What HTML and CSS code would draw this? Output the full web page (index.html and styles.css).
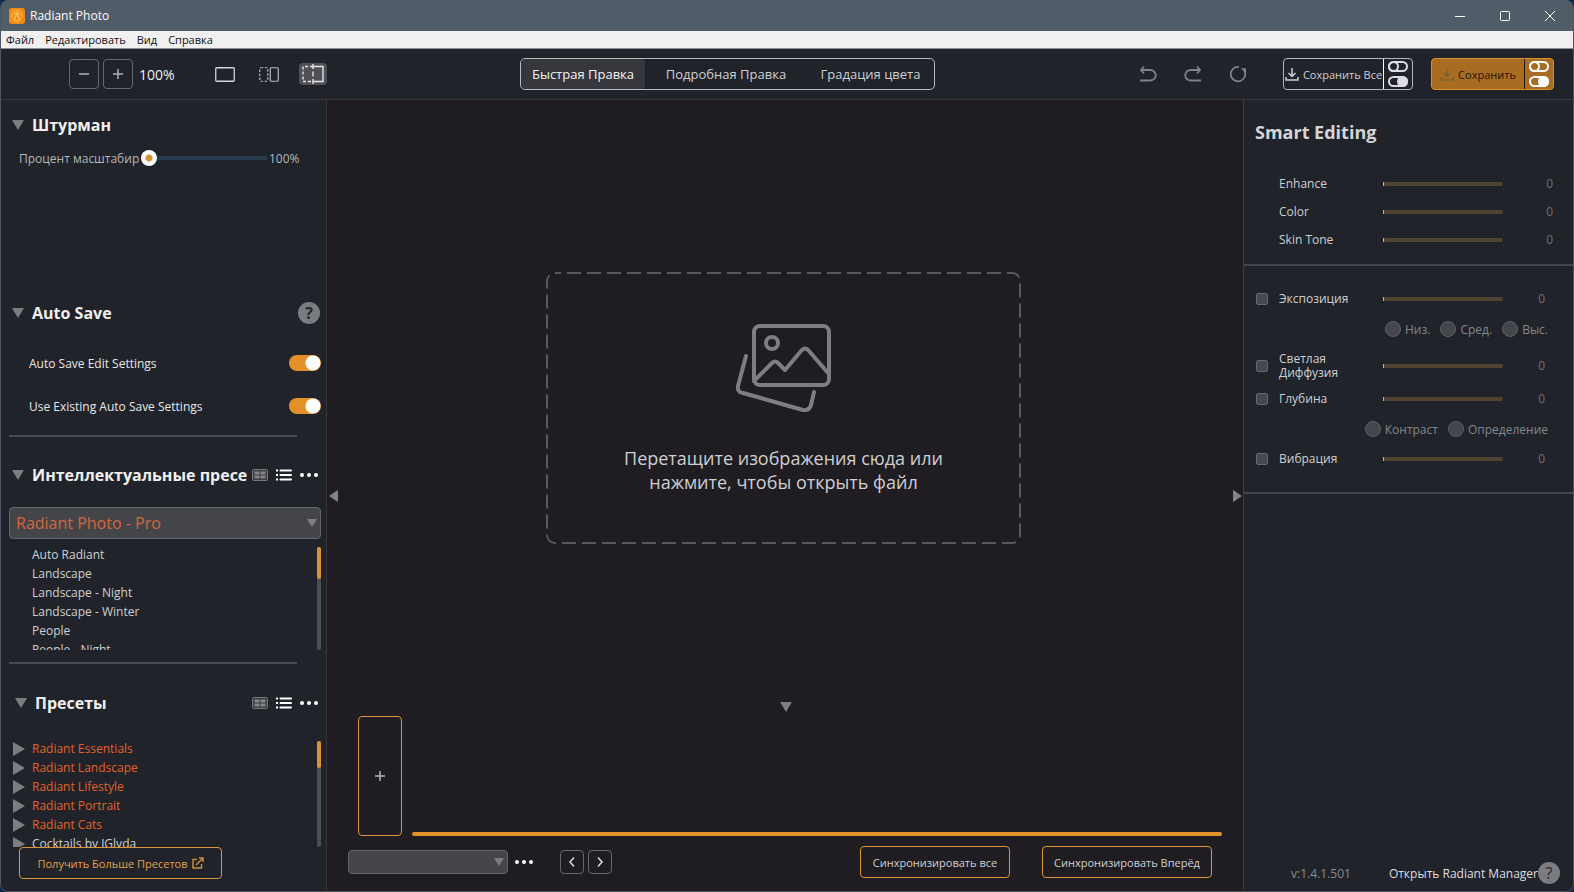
FILE: index.html
```html
<!DOCTYPE html>
<html lang="ru">
<head>
<meta charset="utf-8">
<title>Radiant Photo</title>
<link rel="stylesheet" href="styles.css">
</head>
<body>
<svg class="defs" aria-hidden="true">
  <symbol id="grid" viewBox="0 0 16 12"><rect x=".5" y=".5" width="15" height="11" rx="1" fill="#3c3d40" stroke="#77787a"/><path d="M2.500 2.500h5v3h-5zM8.500 2.500h5v3h-5zM2.500 6.500h5v3h-5zM8.500 6.500h5v3h-5z" fill="#858688"/></symbol>
  <symbol id="list" viewBox="0 0 16 12"><path d="M4.500 1.500H15M4.500 6H15M4.500 10.500H15" stroke="#fff" stroke-width="2" stroke-linecap="round"/><path d="M0 .5h2v2H0zM0 5h2v2H0zM0 9.500h2v2H0z" fill="#fff"/></symbol>
  <symbol id="dots" viewBox="0 0 18 4"><circle cx="2" cy="2" r="2" fill="#fff"/><circle cx="9" cy="2" r="2" fill="#fff"/><circle cx="16" cy="2" r="2" fill="#fff"/></symbol>
  <symbol id="down" viewBox="0 0 12 10"><path d="M0 0h12L6 10z" fill="#7d7d80"/></symbol>
  <symbol id="right" viewBox="0 0 12 14"><path d="M0 0l12 7L0 14z" fill="#7d7e80"/></symbol>
  <symbol id="side" viewBox="0 0 9 12"><path d="M9 0v12L0 6z" fill="#858588"/></symbol>
  <symbol id="switches" viewBox="0 0 20 26"><rect x="1" y="1" width="18" height="9" rx="4.500" fill="none" stroke="currentColor" stroke-width="2"/><rect x="1" y="1" width="9" height="9" rx="4.500" fill="none" stroke="currentColor" stroke-width="2"/><rect x="1" y="16" width="18" height="9" rx="4.500" fill="none" stroke="currentColor" stroke-width="2"/><rect x="10" y="16" width="9" height="9" rx="4.500" fill="currentColor" stroke="currentColor" stroke-width="2"/></symbol>
  <symbol id="save" viewBox="0 0 14 14"><path d="M7 1v8M3.500 6L7 9.500 10.500 6M1 10v3h12v-3" fill="none" stroke="currentColor" stroke-width="1.500"/></symbol>
  <symbol id="undo" viewBox="0 0 18 18"><path d="M5 1.500L2 5l3 3.500M2 5h9.500a5 5 0 0 1 0 10.500H1" fill="none" stroke="#818287" stroke-width="1.800"/></symbol>
</svg>
<div class="window">
  <header class="titlebar">
    <svg class="logo" viewBox="0 0 16 16"><rect width="16" height="16" rx="3" fill="#f08a18"/><path d="M5.500 12.500l-3-4.500 1-3.500L6 2.500h4L12.500 4.500l1 3.500-3 4.500zM2.500 8l5.500-4 5.500 4M5.500 12.500L8 4l2.500 8.500M5 5l6 5M11 5l-6 5M6.500 14h3" fill="none" stroke="#ffc75c" stroke-width=".8"/></svg>
    <span class="title">Radiant Photo</span>
    <div class="controls">
      <button aria-label="Свернуть"><svg width="12" height="12"><path d="M1 6.500h10" stroke="#fff"/></svg></button>
      <button aria-label="Развернуть"><svg width="12" height="12"><rect x="1.500" y="1.500" width="9" height="9" rx="1" fill="none" stroke="#fff"/></svg></button>
      <button aria-label="Закрыть"><svg width="12" height="12"><path d="M1 1l10 10M11 1L1 11" stroke="#fff"/></svg></button>
    </div>
  </header>
  <nav class="menubar"><button>Файл</button><button>Редактировать</button><button>Вид</button><button>Справка</button></nav>

  <div class="toolbar">
    <div class="zoom">
      <button class="square" aria-label="Уменьшить"><svg width="12" height="12"><path d="M1 6h10" stroke="#aeb0b4" stroke-width="1.500"/></svg></button>
      <button class="square" aria-label="Увеличить"><svg width="12" height="12"><path d="M1 6h10M6 1v10" stroke="#aeb0b4" stroke-width="1.500"/></svg></button>
      <span class="percent">100%</span>
    </div>
    <div class="views">
      <button aria-label="Один вид"><svg width="20" height="15"><rect x=".75" y=".75" width="18.500" height="13.500" rx="1" fill="none" stroke="#d5d5d8" stroke-width="1.300"/></svg></button>
      <button aria-label="Два вида"><svg width="20" height="15"><rect x=".75" y=".75" width="8" height="13.500" rx="1" fill="none" stroke="#b9b9bd" stroke-width="1.200" stroke-dasharray="2.500 1.500"/><rect x="11.250" y=".75" width="8" height="13.500" rx="1" fill="none" stroke="#b9b9bd" stroke-width="1.200"/></svg></button>
      <button class="on" aria-label="Разделённый вид"><svg width="22" height="20"><path d="M11 2.500H1v15H11" fill="none" stroke="#e5e5e8" stroke-width="1.400" stroke-dasharray="3 2"/><path d="M11 2.500h10v15H11" fill="none" stroke="#e5e5e8" stroke-width="1.400"/><path d="M11 0v20" stroke="#e5e5e8" stroke-width="1.400" stroke-dasharray="5 2.500"/></svg></button>
    </div>
    <div class="tabs"><button class="on">Быстрая Правка</button><button>Подробная Правка</button><button>Градация цвета</button></div>
    <div class="history">
      <button aria-label="Отменить"><svg width="18" height="18"><use href="#undo"/></svg></button>
      <button aria-label="Повторить"><svg class="flip" width="18" height="18"><use href="#undo"/></svg></button>
      <button aria-label="Сбросить"><svg width="18" height="18" viewBox="0 0 18 18"><path d="M10 2A7.200 7.200 0 1 0 15.200 5.500" fill="none" stroke="#818287" stroke-width="1.800"/><path d="M12 3.200h5v5z" fill="#818287"/></svg></button>
    </div>
    <div class="save all"><button class="label"><svg width="14" height="14"><use href="#save"/></svg>Сохранить Все</button><button class="opts" aria-label="Параметры сохранения всех"><svg width="20" height="26"><use href="#switches"/></svg></button></div>
    <div class="save one"><button class="label"><svg width="14" height="14"><use href="#save"/></svg>Сохранить</button><button class="opts" aria-label="Параметры сохранения"><svg width="20" height="26"><use href="#switches"/></svg></button></div>
  </div>

  <div class="body">
    <aside class="left">
      <section class="navigator">
        <h2><svg width="12" height="10"><use href="#down"/></svg><span>Штурман</span></h2>
        <div class="scale"><label for="scale">Процент масштабир</label><input id="scale" type="range" value="0"><output for="scale">100%</output></div>
      </section>
      <section class="autosave">
        <h2><svg width="12" height="10"><use href="#down"/></svg><span>Auto Save</span><button class="help" aria-label="Справка">?</button></h2>
        <label class="toggle">Auto Save Edit Settings<input type="checkbox" checked></label>
        <label class="toggle">Use Existing Auto Save Settings<input type="checkbox" checked></label>
      </section>
      <hr>
      <section class="smart">
        <h2><svg width="12" height="10"><use href="#down"/></svg><span>Интеллектуальные пресе</span><span class="tools"><button aria-label="Сетка"><svg width="16" height="12"><use href="#grid"/></svg></button><button aria-label="Список"><svg width="16" height="12"><use href="#list"/></svg></button><button aria-label="Ещё"><svg width="18" height="4"><use href="#dots"/></svg></button></span></h2>
        <div class="select"><select aria-label="Набор пресетов"><option>Radiant Photo - Pro</option></select><svg width="10" height="8" viewBox="0 0 12 10" preserveAspectRatio="none"><use href="#down"/></svg></div>
        <div class="scroller"><ul><li>Auto Radiant</li><li>Landscape</li><li>Landscape - Night</li><li>Landscape - Winter</li><li>People</li><li>People - Night</li></ul><div class="bar"><i></i></div></div>
      </section>
      <hr>
      <section class="presets">
        <h2><svg width="12" height="10"><use href="#down"/></svg><span>Пресеты</span><span class="tools"><button aria-label="Сетка"><svg width="16" height="12"><use href="#grid"/></svg></button><button aria-label="Список"><svg width="16" height="12"><use href="#list"/></svg></button><button aria-label="Ещё"><svg width="18" height="4"><use href="#dots"/></svg></button></span></h2>
        <div class="scroller tree"><ul>
          <li><svg width="12" height="14"><use href="#right"/></svg>Radiant Essentials</li>
          <li><svg width="12" height="14"><use href="#right"/></svg>Radiant Landscape</li>
          <li><svg width="12" height="14"><use href="#right"/></svg>Radiant Lifestyle</li>
          <li><svg width="12" height="14"><use href="#right"/></svg>Radiant Portrait</li>
          <li><svg width="12" height="14"><use href="#right"/></svg>Radiant Cats</li>
          <li class="plain"><svg width="12" height="14"><use href="#right"/></svg>Cocktails by JGlyda</li>
        </ul><div class="bar"><i></i></div></div>
        <button class="outline more">Получить Больше Пресетов<svg width="12" height="12" viewBox="0 0 12 12"><path d="M5 2.500H1v8.500h8.500V7M4 8l7-7M7 1h4v4" fill="none" stroke="#c58d3f" stroke-width="1.500"/></svg></button>
      </section>
    </aside>

    <main class="center">
      <div class="stage">
        <button class="edge" aria-label="Скрыть левую панель"><svg width="9" height="12"><use href="#side"/></svg></button>
        <button class="drop">
          <svg class="dash" aria-hidden="true"><rect x="1" y="1" rx="8"/></svg>
          <svg width="96" height="88" viewBox="0 0 96 88" fill="none" stroke="#7d7e82" stroke-width="4" stroke-linecap="round" stroke-linejoin="round"><rect x="18" y="2" width="75" height="59" rx="6"/><circle cx="36" cy="19" r="6"/><path d="M18 57L36 39q3-3 6 0l7 7 16-19q4-5 8 0L92 49M10 32L2 62q-1 6 5 7l60 17q6 1 8-5l3-13"/></svg>
          <span>Перетащите изображения сюда или<br>нажмите, чтобы открыть файл</span>
        </button>
        <button class="edge" aria-label="Скрыть правую панель"><svg class="flip" width="9" height="12"><use href="#side"/></svg></button>
      </div>
      <button class="fold" aria-label="Скрыть ленту"><svg width="12" height="10"><use href="#down"/></svg></button>
      <div class="strip"><button class="add" aria-label="Добавить"><svg width="12" height="12"><path d="M1 6h10M6 1v10" stroke="#b5b5ba" stroke-width="1.500"/></svg></button><div class="track"></div></div>
      <div class="actions">
        <div class="select"><select aria-label="Фильтр"><option></option></select><svg width="10" height="8" viewBox="0 0 12 10" preserveAspectRatio="none"><use href="#down"/></svg></div>
        <button class="bare" aria-label="Ещё"><svg width="18" height="4"><use href="#dots"/></svg></button>
        <div class="pager"><button aria-label="Назад"><svg width="6" height="10"><path d="M5 0.500L1 5l4 4.500" fill="none" stroke="#ddd" stroke-width="1.500"/></svg></button><button aria-label="Вперёд"><svg width="6" height="10"><path d="M1 0.500L5 5 1 9.500" fill="none" stroke="#ddd" stroke-width="1.500"/></svg></button></div>
        <div class="sync"><button class="outline">Синхронизировать все</button><button class="outline">Синхронизировать Вперёд</button></div>
      </div>
    </main>

    <aside class="right">
      <section class="basic">
        <h2>Smart Editing</h2>
        <div class="param"><label for="p1">Enhance</label><input id="p1" type="range" value="0"><output>0</output></div>
        <div class="param"><label for="p2">Color</label><input id="p2" type="range" value="0"><output>0</output></div>
        <div class="param"><label for="p3">Skin Tone</label><input id="p3" type="range" value="0"><output>0</output></div>
      </section>
      <section class="fine">
        <div class="param"><input id="c1" type="checkbox"><label for="c1">Экспозиция</label><input type="range" value="0" aria-label="Экспозиция"><output>0</output></div>
        <div class="radios"><label><input type="radio" name="exp">Низ.</label><label><input type="radio" name="exp">Сред.</label><label><input type="radio" name="exp">Выс.</label></div>
        <div class="param tall"><input id="c2" type="checkbox"><label for="c2">Светлая Диффузия</label><input type="range" value="0" aria-label="Светлая Диффузия"><output>0</output></div>
        <div class="param"><input id="c3" type="checkbox"><label for="c3">Глубина</label><input type="range" value="0" aria-label="Глубина"><output>0</output></div>
        <div class="radios"><label><input type="radio" name="depth">Контраст</label><label><input type="radio" name="depth">Определение</label></div>
        <div class="param"><input id="c4" type="checkbox"><label for="c4">Вибрация</label><input type="range" value="0" aria-label="Вибрация"><output>0</output></div>
      </section>
      <footer><span class="version">v:1.4.1.501</span><a href="#">Открыть Radiant Manager</a><button class="help" aria-label="Справка">?</button></footer>
    </aside>
  </div>
</div>
</body>
</html>
```
FILE: styles.css
```css
* { box-sizing: border-box; }
body { margin: 0; background: #0c2a4c; font: 12px/19px "Open Sans", "Noto Sans", sans-serif; color: #cfd0d2; }
button { background: none; border: 0; padding: 0; margin: 0; font: inherit; color: inherit; display: flex; align-items: center; justify-content: center; white-space: nowrap; }
svg { display: block; flex: none; }
.defs { position: absolute; width: 0; height: 0; }
.flip { transform: scaleX(-1); }
.window { display: flex; flex-direction: column; min-height: 100vh; border: 1px solid #4f5660; border-top: 0; border-radius: 8px; overflow: hidden; background: #1f1d21; }

.titlebar { display: flex; align-items: center; height: 31px; padding: 0 17px 0 8px; background: #515c69; color: #fff; }
.logo { width: 16px; height: 16px; }
.title { margin-left: 5px; }
.controls { display: flex; gap: 33px; margin-left: auto; }
.menubar { display: flex; gap: 11px; height: 18px; padding: 0 5px; background: #f0f0f0; border-bottom: 1px solid #8b9197; color: #111; font-size: 11px; }

.toolbar { display: flex; align-items: center; height: 51px; padding: 0 19px 0 68px; background: #20232a; border-bottom: 1px solid #38383d; }
.zoom { display: flex; align-items: center; gap: 4px; width: 146px; }
.square { width: 30px; height: 30px; border: 1px solid #66676c; border-radius: 4px; }
.percent { margin-left: 2px; font-size: 14px; color: #eee; }
.views { display: flex; align-items: center; gap: 24px; }
.views .on { width: 28px; height: 22px; background: #505157; border-radius: 4px; margin-left: -4px; }
.tabs { display: flex; height: 32px; margin-left: 193px; border: 1px solid #b9babd; border-radius: 5px; font-size: 13px; overflow: hidden; }
.tabs button { width: 162px; }
.tabs .on { width: 124px; background: #36373c; border-radius: 4px; color: #f4f4f4; }
.tabs button:last-child { width: 127px; }
.history { display: flex; gap: 27px; margin-left: auto; }
.save { display: flex; height: 32px; border: 1px solid #b4b5b9; border-radius: 4px; font-size: 11px; }
.save .label { width: 99px; gap: 4px; }
.save .opts { width: 29px; border-left: 1px solid #fff; color: #dcdce2; }
.all { margin-left: 36px; }
.one { margin-left: 18px; background: #a86d20; border-color: #dc8d2c; color: #1c130a; }
.one .label { width: 92px; }
.one .label svg { color: #806035; }
.one .opts { border-color: #20160a; color: #fff; }

.body { display: flex; flex: 1; }
.left { display: flex; flex-direction: column; width: 326px; border-right: 1px solid #37373c; background: #20232a; padding-bottom: 12px; }
h2 { display: flex; align-items: center; height: 24px; margin: 0; padding: 0 5px 0 11px; font-size: 16px; font-weight: 700; line-height: 24px; color: #f0f0f0; }
.left h2 > span:not(.tools) { margin-left: 8px; flex: 1; overflow: hidden; white-space: nowrap; }
.left hr { width: 288px; height: 2px; margin: 0 0 0 8px; border: 0; background: #484b51; flex: none; }
.help { width: 22px; height: 22px; border-radius: 50%; background: #7b7c80; color: #25272d; font-size: 16px; }
.left .help { margin-right: 1px; }
.navigator { height: 201px; padding-top: 13px; }
.scale { display: flex; align-items: center; height: 20px; margin: 11px 0 0 18px; color: #b4b6ba; }
.scale label { width: 122px; white-space: nowrap; }
.scale output { margin-left: 2px; }
input[type=range] { appearance: none; width: 120px; height: 4px; margin: 0; border-radius: 2px; background: #504332; }
input[type=range]::-webkit-slider-thumb { appearance: none; width: 1px; height: 4px; background: #b8b4ac; }
#scale { width: 126px; height: 16px; background: linear-gradient(#263c4c, #263c4c) center / 100% 4px no-repeat; }
#scale::-webkit-slider-thumb { width: 16px; height: 16px; border-radius: 50%; background: radial-gradient(circle, #d89035 3px, #fff 4px); }
.autosave { height: 134px; }
.toggle { display: flex; align-items: center; justify-content: space-between; height: 24px; margin: 26px 5px 0 28px; color: #e8e8e8; }
.toggle + .toggle { margin-top: 19px; }
.tools { display: flex; align-items: center; gap: 8px; margin: 0 3px 0 4px; }
.smart { height: 225px; padding-top: 26px; }
.select { position: relative; height: 32px; margin: 20px 5px 0 8px; }
.select select { appearance: none; width: 100%; height: 100%; padding: 0 6px; border: 1px solid #65666b; border-radius: 4px; background: #444549; color: #d4663c; font: 16px "Open Sans", sans-serif; }
.select svg { position: absolute; right: 4px; top: 50%; margin-top: -4px; }
.scroller { display: flex; height: 103px; margin: 8px 5px 0 31px; overflow: hidden; }
ul { flex: 1; margin: 0; padding: 0; list-style: none; margin-top: -2px; }
li { display: flex; align-items: center; height: 19px; }
.bar { width: 4px; background: #4b4e54; border-radius: 2px; }
.bar i { display: block; height: 32px; background: #dc9038; border-radius: 2px; }
.presets { padding-top: 27px; }
.presets h2 { padding-left: 14px; }
.tree { height: 106px; margin: 26px 5px 0 12px; }
.tree .bar i { height: 27px; }
.tree li { gap: 7px; color: #e36228; }
.tree .plain { color: #cfd0d2; }
.outline { height: 32px; border: 1px solid #dc9538; border-radius: 4px; font-size: 11px; }
.more { width: 203px; margin: 0 0 0 18px; gap: 4px; color: #e0a248; }

.center { display: flex; flex: 1; flex-direction: column; min-width: 0; }
.stage { display: flex; flex: 1; align-items: center; justify-content: space-between; padding: 15px 1px 0 2px; }
.edge { margin-top: 176px; }
.drop { position: relative; flex-direction: column; width: 475px; height: 272px; padding-top: 2px; margin-right: 4px; gap: 34px; font-size: 18px; line-height: 24px; color: #cfcfd3; }
.dash { position: absolute; inset: 0; width: 100%; height: 100%; }
.dash rect { width: calc(100% - 2px); height: calc(100% - 2px); fill: none; stroke: #59595d; stroke-width: 2px; stroke-dasharray: 14 6; stroke-dashoffset: 8px; }
.fold { height: 12px; margin-left: 2px; align-self: center; }
.strip { display: flex; align-items: flex-end; gap: 10px; height: 120px; margin: 3px 21px 0 31px; }
.add { width: 44px; height: 120px; border: 1px solid #dc9538; border-radius: 4px; }
.track { flex: 1; height: 4px; background: #e0922c; border-radius: 2px; }
.actions { display: flex; align-items: center; height: 32px; margin: 10px 31px 13px 21px; }
.actions .select { width: 160px; height: 24px; margin: 0; }
.bare { margin-left: 7px; }
.pager { display: flex; gap: 4px; margin-left: 27px; }
.pager button { width: 24px; height: 24px; border: 1px solid #66666b; border-radius: 4px; }
.sync { display: flex; gap: 32px; margin-left: auto; }
.sync button { width: 150px; }
.sync button + button { width: 170px; }

.right { display: flex; flex-direction: column; width: 330px; background: #20232a; border-left: 1px solid #3b3b41; }
.right h2 { margin-bottom: 26px; font-size: 18px; color: #d5d5d8; }
.basic { height: 166px; padding-top: 20px; border-bottom: 2px solid #43464c; }
.param { display: flex; align-items: center; height: 28px; padding-left: 35px; line-height: 14px; }
.param label { width: 104px; padding-right: 28px; }
.basic .param label { padding-right: 0; }
.param output { margin-left: auto; padding-right: 20px; color: #6e7075; }
.fine { height: 228px; padding-top: 19px; border-bottom: 2px solid #43464c; }
.fine .param { padding-left: 12px; }
.fine .param output { padding-right: 28px; }
.fine .tall { height: 38px; margin-top: 2px; }
input[type=checkbox] { appearance: none; width: 12px; height: 12px; margin: 0 11px 0 0; border: 1px solid #66686d; border-radius: 2px; background: #46484e; }
.toggle input[type=checkbox] { width: 32px; height: 16px; margin: 0; border: 0; border-radius: 8px; background: radial-gradient(circle at 24px 8px, #fff 7px, #e49028 8px); }
.radios { display: flex; justify-content: flex-end; align-items: center; gap: 10px; height: 32px; padding-right: 25px; color: #85878b; }
.radios label { display: flex; align-items: center; gap: 4px; }
.radios input { appearance: none; width: 16px; height: 16px; margin: 0; border: 1px solid #5d5f64; border-radius: 50%; background: #44464b; }
footer { display: flex; align-items: center; justify-content: flex-end; height: 22px; margin: auto 13px 7px 0; }
.version { margin-right: 38px; color: #8b8d91; }
footer a { color: #dedee0; text-decoration: none; }
```
